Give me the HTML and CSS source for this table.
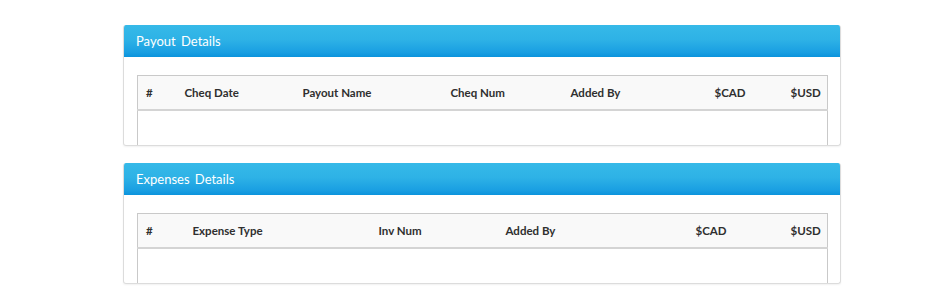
FILE: index.html
```html
<!DOCTYPE html>
<html>
  <head>
    <title>Payouts</title>
    <link rel="stylesheet" href="styles.css">
  </head>
  <body>
    <div class="page">

      <div class="panel">
        <div class="panel-head">Payout Details</div>
        <div class="panel-body">
          <table class="grid">
            <colgroup>
              <col class="w39"><col class="w118"><col class="w148"><col class="w120"><col class="w144"><col class="w76"><col class="w45">
            </colgroup>
            <thead>
              <tr><th>#</th><th>Cheq Date</th><th>Payout Name</th><th>Cheq Num</th><th>Added By</th><th>$CAD</th><th>$USD</th></tr>
            </thead>
            <tbody>
              <tr class="empty"><td colspan="7"></td></tr>
            </tbody>
          </table>
        </div>
      </div>

      <div class="panel">
        <div class="panel-head">Expenses Details</div>
        <div class="panel-body">
          <table class="grid">
            <colgroup>
              <col class="w47"><col class="w186"><col class="w127"><col class="w190"><col class="w95"><col class="w45">
            </colgroup>
            <thead>
              <tr><th>#</th><th>Expense Type</th><th>Inv Num</th><th>Added By</th><th>$CAD</th><th>$USD</th></tr>
            </thead>
            <tbody>
              <tr class="empty"><td colspan="6"></td></tr>
            </tbody>
          </table>
        </div>
      </div>

    </div>
  </body>
</html>
```

FILE: styles.css
```css
html, body { margin: 0; padding: 0; background: #fff; }
body { font-family: Lato, "Open Sans", sans-serif; color: #333; }

.page { width: 718px; margin: 0 auto 0 123px; padding-top: 25px; }

.panel { border: 1px solid #dcdcdc; border-top: none; border-radius: 3px; box-shadow: 0 1px 2px rgba(0,0,0,0.06); margin-bottom: 17px; overflow: hidden; box-sizing: border-box; height: 121px; }
.panel-head { height: 32px; line-height: 32px; padding-left: 13px; margin: 0 -1px; color: #fff; font-size: 13px; word-spacing: 2px;
  background: linear-gradient(to bottom, #36b9e8 0%, #2eb2e6 45%, #1a9fe2 85%, #0b93dc 100%); }
.panel-body { padding: 18px 12px 0 13px; }

.grid { width: 690px; border-collapse: collapse; table-layout: fixed; border: 1px solid #c9c9c9; }
.grid th { height: 33px; padding: 0 0 0 8px; text-align: left; font-size: 11.5px; font-weight: bold; color: #2f2f2f; background: #f9f9f9; border-bottom: 2px solid #d4d4d4; white-space: nowrap; }
.grid .empty td { height: 40px; background: #fff; }

.w39 { width: 39px; } .w118 { width: 118px; } .w148 { width: 148px; } .w120 { width: 120px; }
.w144 { width: 144px; } .w76 { width: 76px; } .w45 { width: 45px; } .w47 { width: 47px; }
.w186 { width: 186px; } .w127 { width: 127px; } .w190 { width: 190px; } .w95 { width: 95px; }
```
